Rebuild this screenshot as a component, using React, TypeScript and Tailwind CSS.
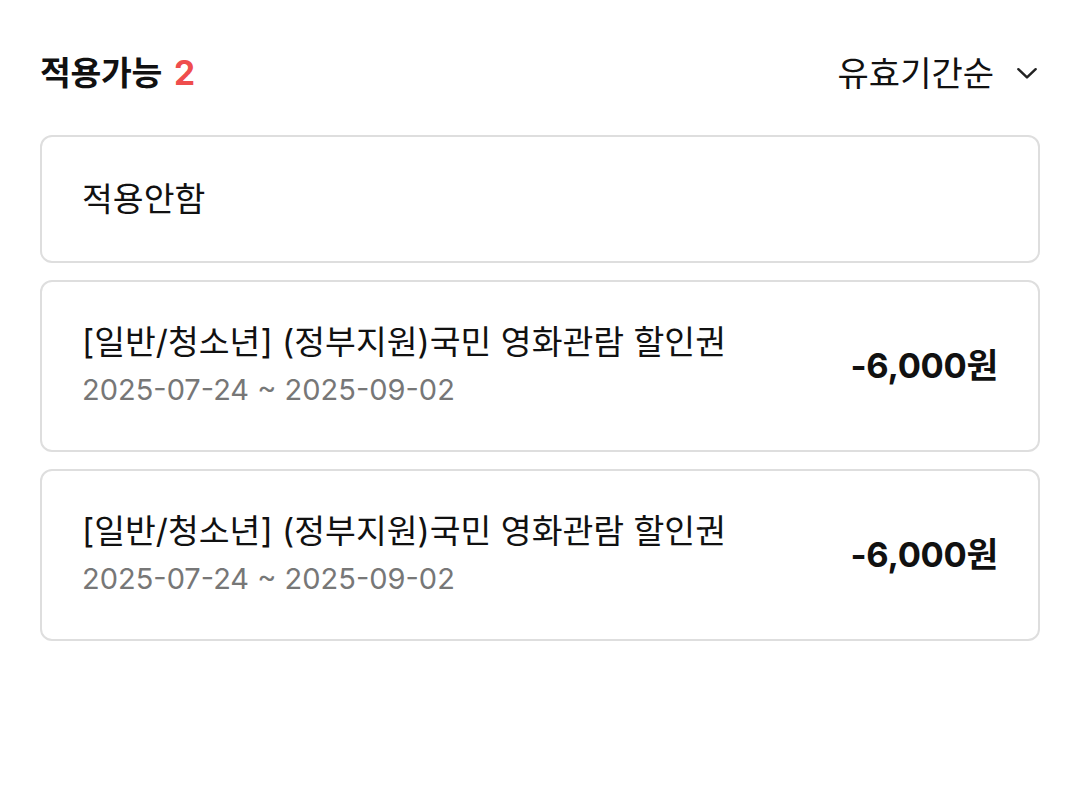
import React from 'react';

const coupons = [
  { title: '[일반/청소년] (정부지원)국민 영화관람 할인권', period: '2025-07-24 ~ 2025-09-02', amount: '-6,000원' },
  { title: '[일반/청소년] (정부지원)국민 영화관람 할인권', period: '2025-07-24 ~ 2025-09-02', amount: '-6,000원' }
];

export default function App() {
  return (
    <div
      className="w-[1080px] h-[799px] bg-white px-10 pt-[50px] text-[#111]"
      style={{ fontFamily: 'Inter, "Noto Sans CJK KR", "Noto Sans", sans-serif' }}
    >
      <div className="flex items-center justify-between h-[46px]">
        <div className="text-[33.5px] font-bold tracking-[-0.3px]">
          적용가능<span className="ml-[12px] text-[#ef4d4d]">2</span>
        </div>
        <button className="flex items-center gap-[20px] text-[34px]">
          유효기간순
          <svg width="26" height="26" viewBox="0 0 24 24" fill="none" stroke="#222" strokeWidth="2.3" strokeLinecap="round" strokeLinejoin="round">
            <path d="M4 8.5l8 7.5 8-7.5" />
          </svg>
        </button>
      </div>

      <div className="mt-[39px] flex flex-col gap-[17px]">
        <div className="h-[128px] rounded-[12px] border-2 border-[#dedede] flex items-center pl-[40px]">
          <span className="text-[33.5px]">적용안함</span>
        </div>
        {coupons.map((c, i) => (
          <div key={i} className="h-[172px] rounded-[12px] border-2 border-[#dedede] flex items-center justify-between pl-[40px] pr-[40px]">
            <div className="flex flex-col">
              <span className="text-[33.5px] leading-[48px]">{c.title}</span>
              <span className="text-[29px] leading-[48px] text-[#777]">{c.period}</span>
            </div>
            <span className="text-[34.5px] font-bold tracking-[-0.3px]">{c.amount}</span>
          </div>
        ))}
      </div>
    </div>
  );
}
